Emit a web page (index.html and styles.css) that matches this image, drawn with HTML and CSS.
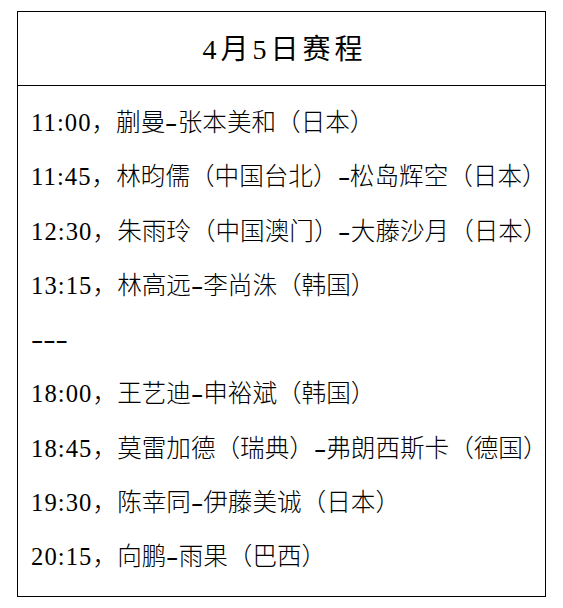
FILE: index.html
```html
<!DOCTYPE html>
<html lang="zh-CN">
<head>
<meta charset="utf-8">
<title>4月5日赛程</title>
<link rel="stylesheet" href="styles.css">
</head>
<body>
<div class="card">
  <div class="card-head">4月5日赛程</div>
  <div class="card-body">
    <p class="row"><span class="time">11:00</span>，蒯曼<span class="vs">-</span>张本美和（日本）</p>
    <p class="row"><span class="time">11:45</span>，林昀儒（中国台北）<span class="vs">-</span>松岛辉空（日本）</p>
    <p class="row"><span class="time">12:30</span>，朱雨玲（中国澳门）<span class="vs">-</span>大藤沙月（日本）</p>
    <p class="row"><span class="time">13:15</span>，林高远<span class="vs">-</span>李尚洙（韩国）</p>
    <p class="row"><span class="sep">---</span></p>
    <p class="row"><span class="time">18:00</span>，王艺迪<span class="vs">-</span>申裕斌（韩国）</p>
    <p class="row"><span class="time">18:45</span>，莫雷加德（瑞典）<span class="vs">-</span>弗朗西斯卡（德国）</p>
    <p class="row"><span class="time">19:30</span>，陈幸同<span class="vs">-</span>伊藤美诚（日本）</p>
    <p class="row"><span class="time">20:15</span>，向鹏<span class="vs">-</span>雨果（巴西）</p>
  </div>
</div>
</body>
</html>
```

FILE: styles.css
```css
html, body {
  margin: 0;
  padding: 0;
  background: #fff;
}

body {
  font-family: "Liberation Serif", "Noto Sans CJK SC", serif;
  color: #000;
}

.card {
  margin: 11px 0 0 17px;
  width: 529px;
  height: 586px;
  box-sizing: border-box;
  border: 1px solid #000;
  display: flex;
  flex-direction: column;
}

.card-head {
  height: 74px;
  flex: none;
  box-sizing: border-box;
  border-bottom: 1px solid #000;
  display: flex;
  align-items: center;
  justify-content: center;
  font-size: 28px;
  font-weight: 400;
  letter-spacing: 4px;
  padding: 0 0 3px 6px;
}

.card-body {
  flex: 1;
  padding: 10px 13px 0;
}

.row {
  margin: 0;
  height: 54.25px;
  line-height: 54.25px;
  font-size: 24.6px;
  font-weight: 300;
  white-space: nowrap;
}

.time {
  letter-spacing: 1.1px;
}

.vs {
  display: inline-block;
  width: 0.5em;
  text-align: center;
  transform: scaleX(1.5);
}

.sep {
  display: inline-block;
  transform: scaleX(1.5);
  transform-origin: left center;
}
```
